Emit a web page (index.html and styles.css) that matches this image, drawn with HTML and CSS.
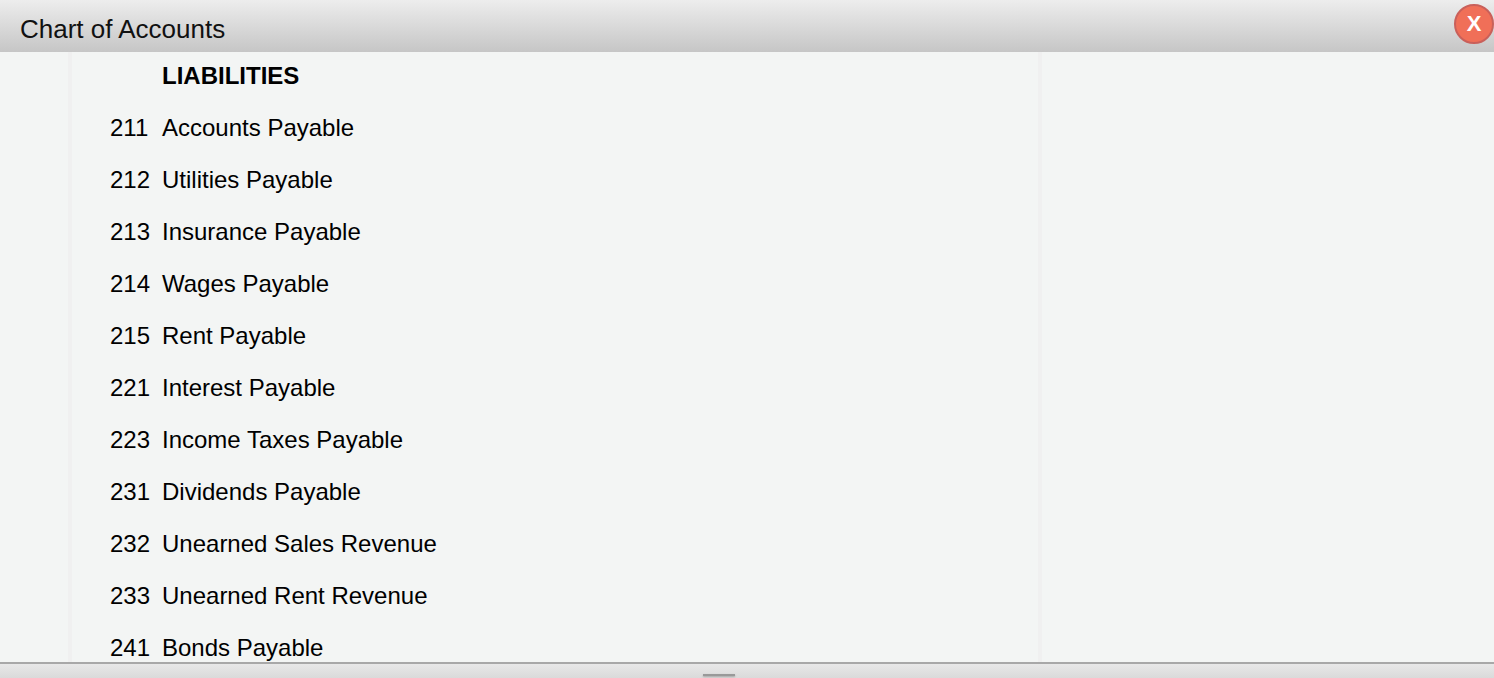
FILE: index.html
```html
<!DOCTYPE html>
<html lang="en">
<head>
    <meta charset="UTF-8">
    <meta name="viewport" content="width=device-width, initial-scale=1.0">
    <title>Chart of Accounts</title>
    <link rel="stylesheet" href="styles.css">
</head>
<body>
    <div class="panel">
        <header class="panel-header">
            <h1>Chart of Accounts</h1>
            <button type="button" class="close-btn">X</button>
        </header>

        <main class="panel-body">
            <div class="sheet">
                <div class="account-row heading"><span class="code"></span><span>LIABILITIES</span></div>
                <div class="account-row"><span class="code">211</span><span>Accounts Payable</span></div>
                <div class="account-row"><span class="code">212</span><span>Utilities Payable</span></div>
                <div class="account-row"><span class="code">213</span><span>Insurance Payable</span></div>
                <div class="account-row"><span class="code">214</span><span>Wages Payable</span></div>
                <div class="account-row"><span class="code">215</span><span>Rent Payable</span></div>
                <div class="account-row"><span class="code">221</span><span>Interest Payable</span></div>
                <div class="account-row"><span class="code">223</span><span>Income Taxes Payable</span></div>
                <div class="account-row"><span class="code">231</span><span>Dividends Payable</span></div>
                <div class="account-row"><span class="code">232</span><span>Unearned Sales Revenue</span></div>
                <div class="account-row"><span class="code">233</span><span>Unearned Rent Revenue</span></div>
                <div class="account-row"><span class="code">241</span><span>Bonds Payable</span></div>
            </div>
        </main>

        <footer class="panel-footer">
            <div class="grip"></div>
        </footer>
    </div>
</body>
</html>
```

FILE: styles.css
```css
html,
body {
    height: 100%;
}

body {
    font-family: "Liberation Sans", Arial, sans-serif;
    margin: 0;
    background-color: #f3f5f4;
    color: black;
    overflow: hidden;
}

.panel {
    display: flex;
    flex-direction: column;
    height: 100%;
}

.panel-header {
    flex: 0 0 52px;
    display: flex;
    align-items: center;
    justify-content: space-between;
    padding: 6px 0 0 20px;
    box-sizing: border-box;
    background: linear-gradient(#ededed, #c6c6c6);
}

.panel-header h1 {
    margin: 0;
    font-size: 26px;
    font-weight: normal;
    color: #111;
}

.close-btn {
    width: 40px;
    height: 40px;
    margin-top: -10px;
    padding: 0;
    background: #f06f58;
    color: white;
    border: 2px solid #c9605a;
    border-radius: 50%;
    font-family: inherit;
    font-size: 22px;
    font-weight: bold;
    cursor: pointer;
}

.panel-body {
    flex: 1;
    min-height: 0;
    overflow: hidden;
    padding: 0 452px 0 68px;
}

.sheet {
    height: 100%;
    border-left: 4px solid #f0f0f0;
    border-right: 4px solid #f0f0f0;
    box-sizing: border-box;
    padding-left: 38px;
}

.account-row {
    display: flex;
    height: 52px;
    line-height: 48px;
    font-size: 24px;
}

.account-row .code {
    width: 52px;
    flex: none;
}

.account-row.heading {
    font-weight: bold;
}

.panel-footer {
    flex: 0 0 16px;
    padding-left: 703px;
    box-sizing: border-box;
    border-top: 2px solid #a8a8a8;
    background: linear-gradient(#e8e8e8, #dadada);
}

.grip {
    width: 32px;
    height: 2px;
    margin-top: 10px;
    background: #999;
    box-shadow: 0 1px 2px rgba(0, 0, 0, 0.25);
}
```
